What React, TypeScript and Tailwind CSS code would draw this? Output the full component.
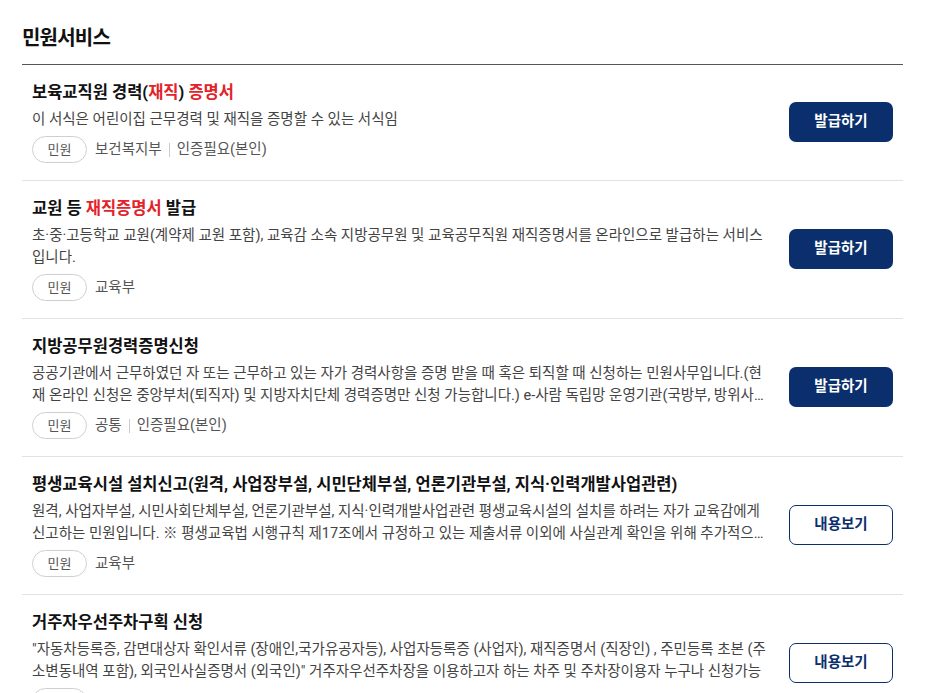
import React from 'react';

type Service = {
  title: React.ReactNode;
  desc: string;
  tag: string;
  meta: string[];
  action: 'issue' | 'view';
};

const Red: React.FC<{ children: React.ReactNode }> = ({ children }) => (
  <span className="text-[#e3232b]">{children}</span>
);

const services: Service[] = [
  {
    title: (
      <>
        보육교직원 경력(<Red>재직</Red>) <Red>증명서</Red>
      </>
    ),
    desc: '이 서식은 어린이집 근무경력 및 재직을 증명할 수 있는 서식임',
    tag: '민원',
    meta: ['보건복지부', '인증필요(본인)'],
    action: 'issue',
  },
  {
    title: (
      <>
        교원 등 <Red>재직증명서</Red> 발급
      </>
    ),
    desc: '초·중·고등학교 교원(계약제 교원 포함), 교육감 소속 지방공무원 및 교육공무직원 재직증명서를 온라인으로 발급하는 서비스입니다.',
    tag: '민원',
    meta: ['교육부'],
    action: 'issue',
  },
  {
    title: '지방공무원경력증명신청',
    desc: '공공기관에서 근무하였던 자 또는 근무하고 있는 자가 경력사항을 증명 받을 때 혹은 퇴직할 때 신청하는 민원사무입니다.(현재 온라인 신청은 중앙부처(퇴직자) 및 지방자치단체 경력증명만 신청 가능합니다.) e-사람 독립망 운영기관(국방부, 방위사업청, 경찰청, 해양경찰청 등)은 해당 기관에 문의하시기 바랍니다.',
    tag: '민원',
    meta: ['공통', '인증필요(본인)'],
    action: 'issue',
  },
  {
    title: '평생교육시설 설치신고(원격, 사업장부설, 시민단체부설, 언론기관부설, 지식·인력개발사업관련)',
    desc: '원격, 사업자부설, 시민사회단체부설, 언론기관부설, 지식·인력개발사업관련 평생교육시설의 설치를 하려는 자가 교육감에게 신고하는 민원입니다. ※ 평생교육법 시행규칙 제17조에서 규정하고 있는 제출서류 이외에 사실관계 확인을 위해 추가적으로 서류를 요청할 수 있습니다.',
    tag: '민원',
    meta: ['교육부'],
    action: 'view',
  },
  {
    title: '거주자우선주차구획 신청',
    desc: '"자동차등록증, 감면대상자 확인서류 (장애인,국가유공자등), 사업자등록증 (사업자), 재직증명서 (직장인) , 주민등록 초본 (주소변동내역 포함), 외국인사실증명서 (외국인)" 거주자우선주차장을 이용하고자 하는 차주 및 주차장이용자 누구나 신청가능',
    tag: '민원',
    meta: ['지방자치단체'],
    action: 'view',
  },
];

const ServiceRow: React.FC<{ item: Service }> = ({ item }) => (
  <li className="flex items-center border-b border-[#e2e2e2] pl-[10px] pr-[10px] pt-[16px] pb-[17px]">
    <div className="min-w-0 flex-1">
      <h3 className="text-[16.5px] font-bold leading-6 text-[#111]">{item.title}</h3>
      <p className="mt-[4px] line-clamp-2 max-h-[44px] text-[14.5px] leading-[22px] text-[#444]">
        {item.desc}
      </p>
      <div className="mt-[5px] flex items-center text-[14.5px] text-[#555]">
        <span className="flex h-[27px] w-[55px] items-center justify-center rounded-full border border-[#cfcfcf] text-[13px] text-[#555]">
          {item.tag}
        </span>
        <span className="ml-[8px] flex items-center">
          {item.meta.map((m, i) => (
            <React.Fragment key={m}>
              {i > 0 && <span className="mx-[7px] h-[14px] w-px bg-[#cccccc]" />}
              <span>{m}</span>
            </React.Fragment>
          ))}
        </span>
      </div>
    </div>
    {item.action === 'issue' ? (
      <button className="ml-[20px] h-[40px] w-[104px] shrink-0 rounded-[7px] bg-[#0b2f6c] text-[14.5px] font-bold text-white">
        발급하기
      </button>
    ) : (
      <button className="ml-[20px] h-[40px] w-[104px] shrink-0 rounded-[7px] border border-[#0b2f6c] bg-white text-[14.5px] font-bold text-[#0b2f6c]">
        내용보기
      </button>
    )}
  </li>
);

export default function App() {
  return (
    <div
      className="min-h-screen bg-white px-[22px] pt-[24px]"
      style={{ fontFamily: 'Roboto, "Noto Sans CJK KR", sans-serif' }}
    >
      <h2 className="mb-[12px] text-[20px] font-bold leading-7 tracking-[-0.8px] text-[#111]">민원서비스</h2>
      <ul className="border-t border-[#555]">
        {services.map((s, i) => (
          <ServiceRow key={i} item={s} />
        ))}
      </ul>
    </div>
  );
}
